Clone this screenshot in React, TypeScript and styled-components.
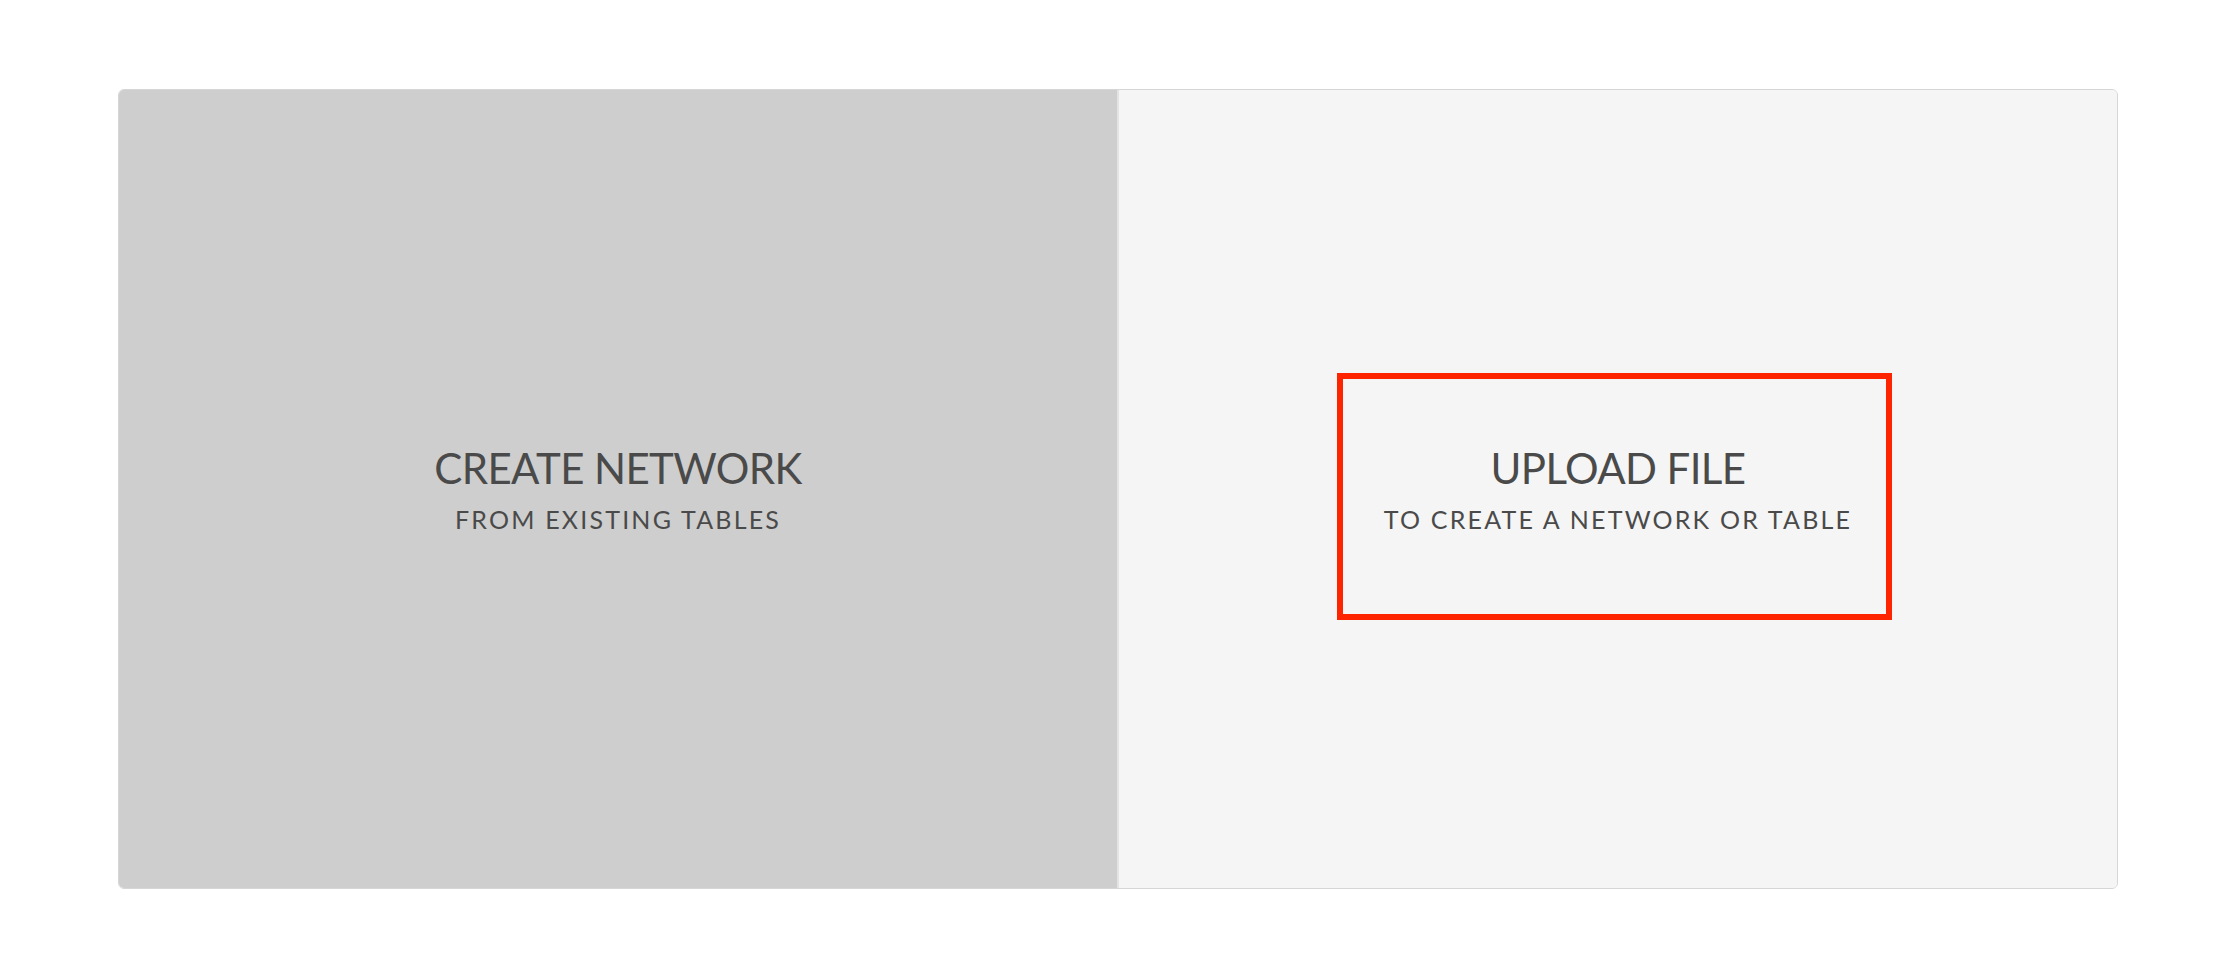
import React from "react";
import styled, { createGlobalStyle } from "styled-components";

const Global = createGlobalStyle`
  html, body { margin: 0; padding: 0; background: #ffffff; }
  body { font-family: Lato, "Open Sans", sans-serif; }
`;

const Page = styled.div`
  padding: 89px 0 0 118px;
`;

const Panel = styled.div`
  width: 2000px;
  height: 800px;
  box-sizing: border-box;
  display: flex;
  border: 1px solid #d6d6d6;
  border-radius: 6px;
  overflow: hidden;
  box-shadow: inset 0 0 0 1px #f2f2f2;
`;

const Pane = styled.div<{ $tone: "dark" | "light" }>`
  flex: 1;
  display: flex;
  align-items: center;
  justify-content: center;
  background: ${(p) => (p.$tone === "dark" ? "#cecece" : "#f5f5f5")};
  border-left: ${(p) => (p.$tone === "light" ? "2px solid #e3e3e3" : "none")};
  cursor: pointer;
`;

const Zone = styled.div<{ $active?: boolean }>`
  width: 555px;
  height: 247px;
  box-sizing: border-box;
  margin: 15px 7px 0 0;
  border: 6px solid ${(p) => (p.$active ? "#ff2400" : "transparent")};
  display: flex;
  flex-direction: column;
  align-items: center;
  padding: 64px 0 0 7px;
`;

const Title = styled.div`
  font-size: 42px;
  line-height: 50px;
  color: #4a4a4a;
  font-weight: 400;
  letter-spacing: -0.6px;
  white-space: nowrap;
`;

const Subtitle = styled.div`
  font-size: 25px;
  line-height: 30px;
  color: #4a4a4a;
  margin-top: 11px;
  letter-spacing: 2.2px;
  white-space: nowrap;
`;

export default function App() {
  return (
    <>
      <Global />
      <Page>
        <Panel>
          <Pane $tone="dark">
            <Zone>
              <Title>CREATE NETWORK</Title>
              <Subtitle>FROM EXISTING TABLES</Subtitle>
            </Zone>
          </Pane>
          <Pane $tone="light">
            <Zone $active>
              <Title>UPLOAD FILE</Title>
              <Subtitle>TO CREATE A NETWORK OR TABLE</Subtitle>
            </Zone>
          </Pane>
        </Panel>
      </Page>
    </>
  );
}
